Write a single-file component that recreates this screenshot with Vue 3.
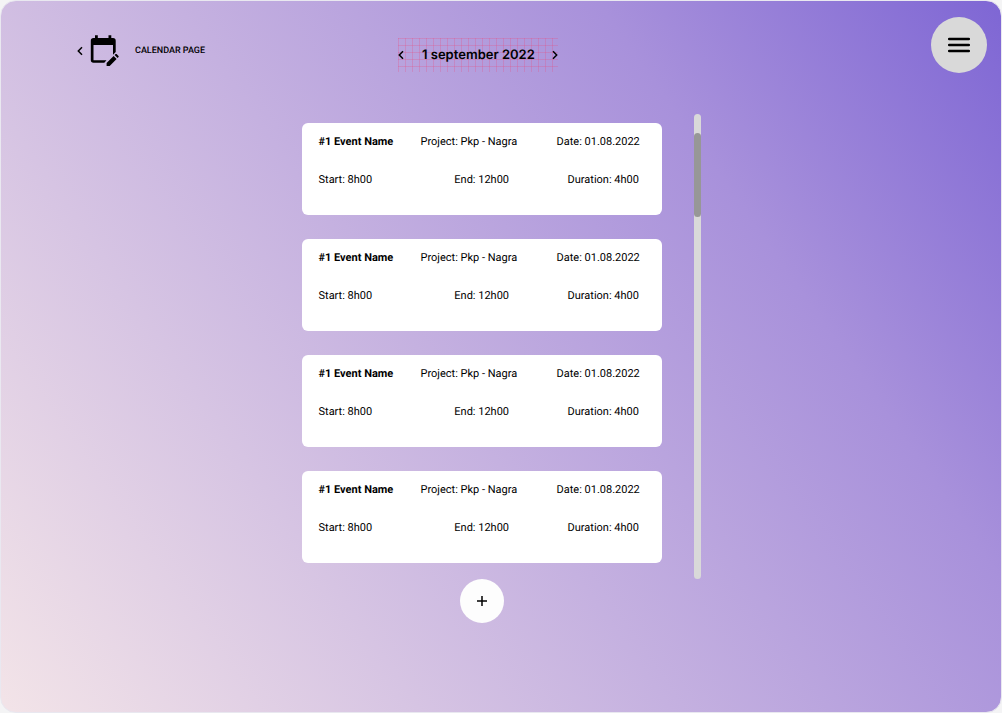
<script setup>
import { ref } from 'vue'

const day = ref('1 september 2022')
const events = ref(
  [1, 2, 3, 4].map((id) => ({
    id,
    name: '#1 Event Name',
    project: 'Pkp - Nagra',
    date: '01.08.2022',
    start: '8h00',
    end: '12h00',
    duration: '4h00',
  }))
)
</script>

<template>
  <div class="page">
    <header class="top">
      <div class="crumb">
        <button class="plain" type="button" aria-label="Back">
          <svg width="6" height="10" viewBox="0 0 6 10"><path d="M5 1.2 1.3 5 5 8.8" /></svg>
        </button>
        <svg class="calendar" width="30" height="32" viewBox="0 0 30 32" aria-hidden="true">
          <path d="M5 0.300h2.800v2.700h10.700V0.300h2.800V3H23a2.700 2.700 0 0 1 2.700 2.700V17L23 19.700V10H3.500v15.200h13L14.300 27.800H3.500A2.700 2.700 0 0 1 .8 25.100V5.700A2.700 2.700 0 0 1 3.500 3H5z" />
          <path d="M16.600 28 23.600 21 26.600 24 19.700 31H16.600zM24.600 20 25.600 19.100Q26.100 18.700 26.600 19.100L28.500 21Q29 21.500 28.500 22L27.600 23z" />
        </svg>
        <h1>CALENDAR PAGE</h1>
      </div>

      <nav class="day" aria-label="Day">
        <button class="plain" type="button" aria-label="Previous day">
          <svg width="6" height="10" viewBox="0 0 6 10"><path d="M5 1.200 1.300 5 5 8.800" /></svg>
        </button>
        <h2>{{ day }}</h2>
        <button class="plain" type="button" aria-label="Next day">
          <svg width="6" height="10" viewBox="0 0 6 10"><path d="M1 1.200 4.700 5 1 8.800" /></svg>
        </button>
      </nav>

      <button class="menu" type="button" aria-label="Menu">
        <svg width="24" height="16" viewBox="0 0 24 16"><path d="M2.200 2H21.800M2.200 8H21.800M2.200 14H21.800" /></svg>
      </button>
    </header>

    <main class="content">
      <div class="column">
        <article v-for="event in events" :key="event.id" class="card">
          <div class="row first">
            <h3>{{ event.name }}</h3>
            <span>Project: {{ event.project }}</span>
            <span>Date: {{ event.date }}</span>
          </div>
          <div class="row second">
            <span>Start: {{ event.start }}</span>
            <span>End: {{ event.end }}</span>
            <span>Duration: {{ event.duration }}</span>
          </div>
        </article>
        <button class="add" type="button" aria-label="Add event">
          <svg width="12" height="12" viewBox="0 0 12 12"><path d="M6 1V11M1 6H11" /></svg>
        </button>
      </div>
      <div class="track" aria-hidden="true"><div class="thumb"></div></div>
    </main>
  </div>
</template>

<style>
body {
  margin: 0;
  background: #f4f4f5;
}
</style>

<style scoped>
.page {
  box-sizing: border-box;
  min-height: 100vh;
  border: 1px solid #e9e8f0;
  border-radius: 16px;
  background: linear-gradient(55deg, #f3e4e8 0%, #a891db 73%, #7e66d4 100%) border-box;
  color: #000;
  font-family: Roboto, "Liberation Sans", sans-serif;
  font-size: 11px;
  line-height: 14px;
  text-rendering: geometricPrecision;
}
h1, h2, h3 {
  margin: 0;
  font-size: inherit;
}
svg {
  display: block;
  fill: none;
  stroke: #000;
  stroke-width: 1.5;
}
button {
  padding: 0;
  border: 0;
  cursor: pointer;
}
.plain {
  background: none;
}
.top {
  display: grid;
  grid-template-columns: 3fr 160px 4fr;
  padding: 16px 14px 0 76px;
}
.crumb {
  display: flex;
  align-items: center;
  height: 68px;
}
.crumb .calendar {
  margin: 0 15px 0 7px;
  fill: #000;
  stroke: none;
}
.crumb h1 {
  font-size: 9px;
  font-weight: 500;
  line-height: 15px;
}
.day {
  display: flex;
  align-items: center;
  justify-content: space-between;
  height: 34px;
  margin-top: 21px;
  background-image:
    repeating-linear-gradient(to right, rgba(235, 70, 120, 0.25) 0 1px, transparent 1px 7px),
    repeating-linear-gradient(to bottom, rgba(235, 70, 120, 0.25) 0 1px, transparent 1px 7px);
}
.day h2 {
  font-family: Inter, "Liberation Sans", sans-serif;
  font-size: 13px;
  font-weight: 600;
  font-kerning: none;
  line-height: 15px;
}
.menu {
  display: grid;
  place-items: center;
  justify-self: end;
  width: 56px;
  height: 56px;
  border-radius: 50%;
  background: #d9d9d9;
}
.menu svg {
  stroke-width: 2.5;
  stroke-linecap: round;
}
.content {
  display: flex;
  justify-content: center;
  gap: 32px;
  padding: 29px 0 40px;
}
.column {
  display: flex;
  flex-direction: column;
  gap: 24px;
  width: 360px;
  padding-top: 9px;
}
.card {
  box-sizing: border-box;
  min-height: 92px;
  padding: 12px 19px 10px 17px;
  border-radius: 6px;
  background: #fff;
}
.row {
  display: grid;
}
.first {
  grid-template-columns: 3fr 4fr 86px;
}
.second {
  grid-template-columns: 6fr 5fr 75px;
  margin-top: 24px;
}
.row h3 {
  font-weight: 700;
}
.row > * {
  white-space: nowrap;
}
.add {
  display: grid;
  place-items: center;
  align-self: center;
  width: 44px;
  height: 44px;
  margin-top: -8px;
  border-radius: 50%;
  background: #fdfdfd;
}
.track {
  box-sizing: border-box;
  width: 7px;
  height: 465px;
  padding-top: 19px;
  border-radius: 4px;
  background: #d9d9d9;
}
.thumb {
  height: 84px;
  border-radius: 4px;
  background: #979797;
}
</style>
